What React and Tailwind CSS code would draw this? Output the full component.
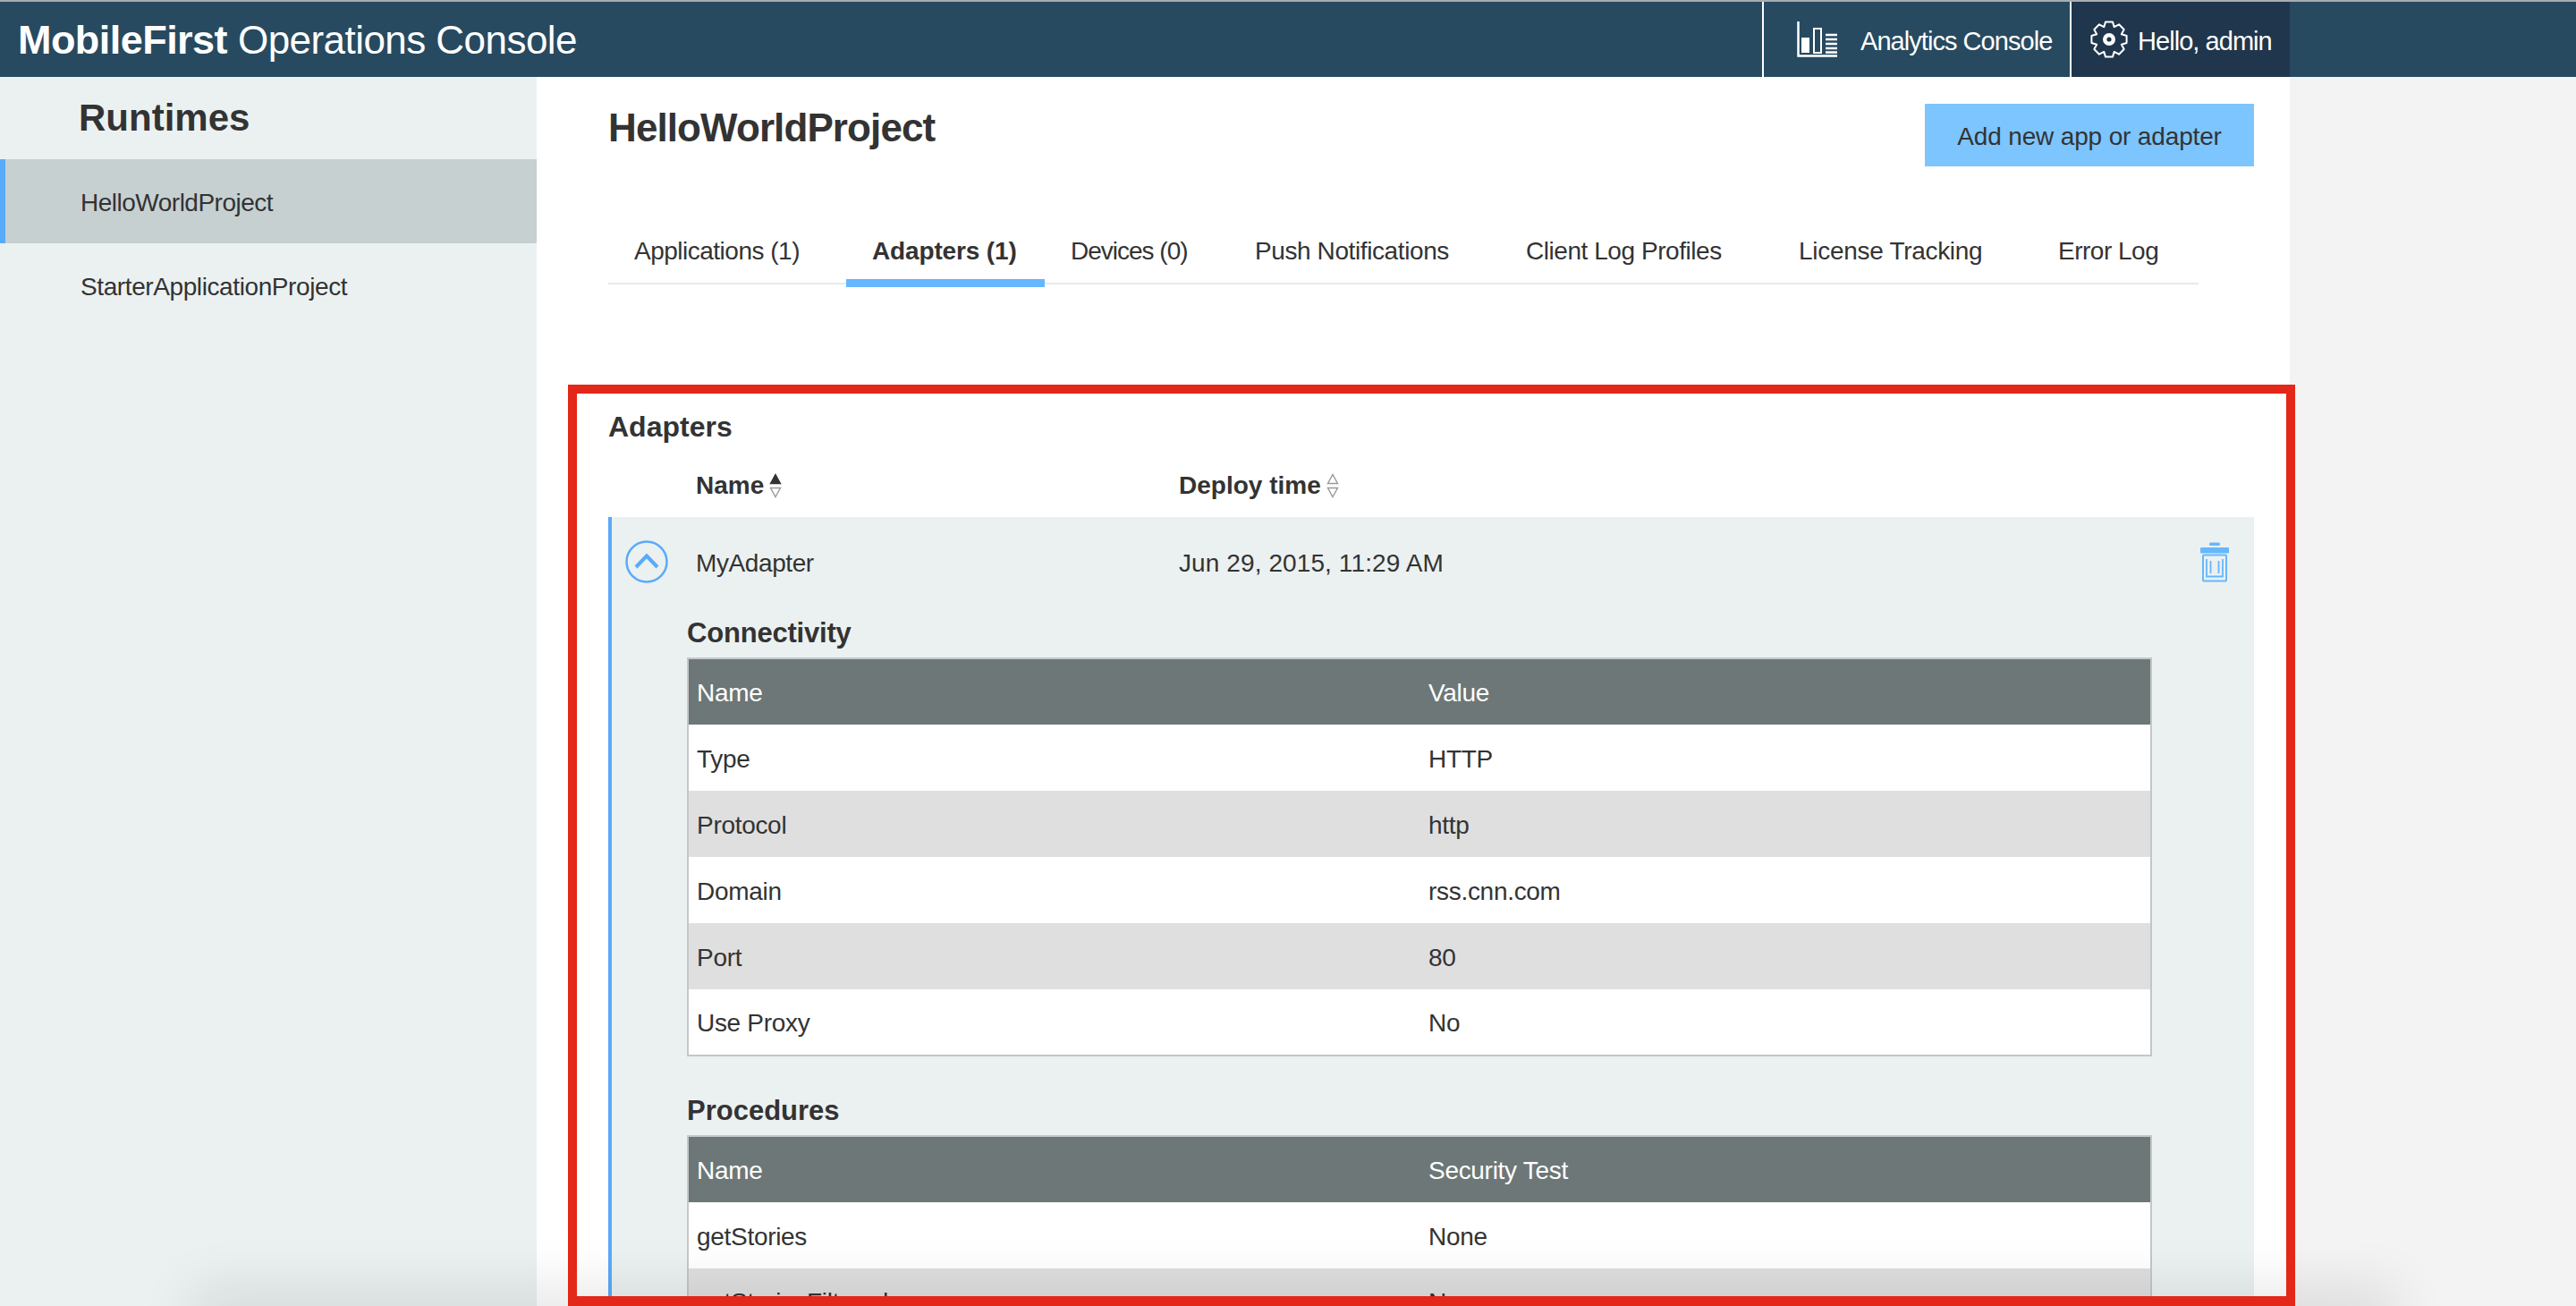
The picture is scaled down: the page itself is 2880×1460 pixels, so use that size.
const tabs = [
  { label: "Applications (1)", className: "w-[266px] tracking-[-0.5px]" },
  { label: "Adapters (1)", className: "w-[222px] border-b-[9px] border-[#66b7fd] font-bold tracking-[-0.15px]" },
  { label: "Devices (0)", className: "w-[206px] tracking-[-1px]" },
  { label: "Push Notifications", className: "w-[303px] tracking-[-0.4px]" },
  { label: "Client Log Profiles", className: "w-[305px] tracking-[-0.45px]" },
  { label: "License Tracking", className: "w-[290px] tracking-[-0.3px]" },
  { label: "Error Log", className: "w-[186px] tracking-[-0.5px]" },
];

const connectivity = [
  ["Type", "HTTP"],
  ["Protocol", "http"],
  ["Domain", "rss.cnn.com"],
  ["Port", "80"],
  ["Use Proxy", "No"],
];

const procedures = [
  ["getStories", "None"],
  ["getStoriesFiltered", "None"],
];

// 8 tooth gear outline, computed so the teeth stay even
function gearPath() {
  const points = [];
  for (let i = 0; i < 8; i++) {
    const a = (i * Math.PI) / 4 - Math.PI / 2;
    [
      [-0.39, 15],
      [-0.2, 20],
      [0.2, 20],
      [0.39, 15],
    ].forEach(([offset, r]) => {
      points.push(
        `${(21 + r * Math.cos(a + offset)).toFixed(2)} ${(21 + r * Math.sin(a + offset)).toFixed(2)}`
      );
    });
  }
  return "M" + points.join("L") + "Z";
}

function GearIcon() {
  return (
    <svg width="42" height="42" viewBox="0 0 42 42" className="shrink-0">
      <path d={gearPath()} fill="none" stroke="#fff" strokeWidth="2" strokeLinejoin="round" />
      <circle cx="21" cy="21" r="7" fill="#fff" />
      <circle cx="21" cy="21" r="2.6" fill="#1f364c" />
    </svg>
  );
}

function ChartIcon() {
  return (
    <svg width="46" height="40" viewBox="0 0 46 40" className="shrink-0" fill="none" stroke="#fff">
      <path d="M1.5 0V38.5H45" strokeWidth="2.5" />
      <rect x="5" y="18" width="9" height="17" fill="#fff" stroke="none" />
      <rect x="19" y="8" width="8" height="27" strokeWidth="2" />
      <path d="M32 15H45M32 20H45M32 25H45M32 30H45M32 34.5H45" strokeWidth="2.5" />
    </svg>
  );
}

function TrashIcon() {
  return (
    <svg width="32" height="45" viewBox="0 0 32 45" className="shrink-0" fill="none" stroke="#66b7fd">
      <rect x="10" y="0.5" width="12" height="3.5" rx="1.5" fill="#66b7fd" stroke="none" />
      <rect x="0" y="6" width="32" height="6.5" rx="1" fill="#66b7fd" stroke="none" />
      <rect x="3" y="14.5" width="26" height="29" rx="1" strokeWidth="2" />
      <path d="M7 19V38.5H25V19M11.5 21V35M20.5 21V35" strokeWidth="1.8" />
    </svg>
  );
}

function CollapseIcon() {
  return (
    <svg width="48" height="48" viewBox="0 0 48 48" className="shrink-0" fill="none" stroke="#5aaafa">
      <circle cx="24" cy="24" r="22.5" strokeWidth="2.5" />
      <path d="M12 30L24 17.5L36 30" strokeWidth="4" />
    </svg>
  );
}

function SortIcon({ up }) {
  return (
    <svg width="14" height="28" viewBox="0 0 14 28" className="ml-[6px] shrink-0">
      <path
        d="M7 1.5L12.5 11.5H1.5Z"
        fill={up ? "#333" : "none"}
        stroke={up ? "#333" : "#999"}
        strokeWidth="1.4"
      />
      <path d="M7 26.5L12.5 16.5H1.5Z" fill="none" stroke="#999" strokeWidth="1.4" />
    </svg>
  );
}

function DetailTable({ head, rows }) {
  return (
    <table className="w-[1638px] table-fixed border-collapse border-2 border-[#c4c6c7] text-[28px] tracking-[-0.3px] text-[#333]">
      <thead>
        <tr className="h-[74px] bg-[#6d7777] text-left text-white">
          <th className="w-[819px] pl-[9px] pt-[3px] font-normal">{head[0]}</th>
          <th className="pl-[9px] pt-[3px] font-normal">{head[1]}</th>
        </tr>
      </thead>
      <tbody>
        {rows.map((row, i) => (
          <tr key={row[0]} className={`h-[74px] ${i % 2 === 0 ? "bg-white" : "bg-[#dfdfdf]"}`}>
            <td className="pl-[9px] pt-[3px]">{row[0]}</td>
            <td className="pl-[9px] pt-[3px]">{row[1]}</td>
          </tr>
        ))}
      </tbody>
    </table>
  );
}

export default function App() {
  return (
    <div className="relative h-[1460px] w-[2880px] overflow-hidden bg-[#f3f3f3] font-['Liberation_Sans',Arial,sans-serif] text-[#333]">
      <header className="flex h-[86px] items-stretch border-t-2 border-[#a9adb0] bg-[#274a60] text-white">
        <div className="flex flex-1 items-center pl-[20px] pt-[1px] text-[45px] tracking-[-0.55px]">
          <span className="font-bold">MobileFirst</span>
          <span className="ml-[12px] text-[44px]">Operations Console</span>
        </div>
        <div className="flex w-[344px] items-center border-l-2 border-white pl-[37px] text-[29px] tracking-[-0.95px]">
          <ChartIcon />
          <span className="ml-[25px] pt-[5px]">Analytics Console</span>
        </div>
        <div className="flex w-[246px] items-center border-l-2 border-white bg-[#1f364c] pl-[21px] text-[29px] tracking-[-0.95px]">
          <GearIcon />
          <span className="ml-[11px] pt-[5px]">Hello, admin</span>
        </div>
        <div className="w-[320px]" />
      </header>

      <div className="flex h-[1374px]">
        <aside className="w-[600px] shrink-0 bg-[#ebf1f1]">
          <h2 className="flex h-[92px] items-center pb-[2px] pl-[88px] text-[42px] font-bold">Runtimes</h2>
          <div className="flex h-[94px] items-center border-l-[6px] border-[#5aaafa] bg-[#c7d0d1] pl-[84px] pt-[3px] text-[28px] tracking-[-0.5px]">
            HelloWorldProject
          </div>
          <div className="flex h-[94px] items-center pl-[90px] pt-[3px] text-[28px] tracking-[-0.4px]">
            StarterApplicationProject
          </div>
        </aside>

        <main className="w-[1960px] shrink-0 bg-white pl-[80px] pr-[40px] pt-[30px]">
          <div className="flex items-start justify-between">
            <h1 className="h-[54px] text-[44px] font-bold leading-[54px] tracking-[-0.9px]">HelloWorldProject</h1>
            <button className="h-[70px] w-[368px] bg-[#7cc5ff] pt-[3px] text-center text-[28px] tracking-[-0.15px]">
              Add new app or adapter
            </button>
          </div>

          <nav className="mt-[112px] flex h-[20px] w-[1778px] border-b-2 border-[#e4ebed]" />
          <div className="-mt-[60px] flex h-[63px] w-[1778px]">
            {tabs.map((tab) => (
              <div key={tab.label} className={`${tab.className} h-[63px] pl-[29px] pt-[3px] text-[28px] leading-[40px]`}>
                {tab.label}
              </div>
            ))}
          </div>

          <h2 className="mt-[136px] h-[40px] text-[32px] font-bold leading-[40px]">Adapters</h2>
          <div className="mb-[12px] mt-[23px] flex h-[46px] items-center text-[28px] font-bold">
            <div className="ml-[98px] flex w-[540px] items-center">
              Name
              <SortIcon up />
            </div>
            <div className="flex items-center">
              Deploy time
              <SortIcon />
            </div>
          </div>

          <section className="border-l-4 border-[#5aaafa] bg-[#ebf1f1] pb-[60px]">
            <div className="flex h-[100px] items-center pl-[15px] pr-[28px] text-[28px]">
              <CollapseIcon />
              <span className="ml-[31px] w-[540px] pt-[3px] tracking-[-0.4px]">MyAdapter</span>
              <span className="flex-1 pt-[3px] tracking-[0.1px]">Jun 29, 2015, 11:29 AM</span>
              <TrashIcon />
            </div>
            <div className="pl-[84px]">
              <h3 className="mb-[7px] mt-[10px] h-[40px] text-[31px] font-bold leading-[40px] tracking-[-0.2px]">
                Connectivity
              </h3>
              <DetailTable head={["Name", "Value"]} rows={connectivity} />
              <h3 className="mb-[7px] mt-[41px] h-[40px] text-[31px] font-bold leading-[40px]">Procedures</h3>
              <DetailTable head={["Name", "Security Test"]} rows={procedures} />
            </div>
          </section>
        </main>
      </div>

      {/* window shadow bleeding in along the bottom edge */}
      <div className="pointer-events-none absolute left-[240px] right-[225px] top-[1465px] h-[10px] shadow-[0_0_60px_25px_rgba(0,0,0,0.1)]" />
      {/* red highlight drawn over the screenshot */}
      <div className="pointer-events-none absolute left-[635px] top-[430px] h-[1030px] w-[1931px] border-x-[10px] border-b-[11px] border-t-[10px] border-[#e32719]" />
    </div>
  );
}
